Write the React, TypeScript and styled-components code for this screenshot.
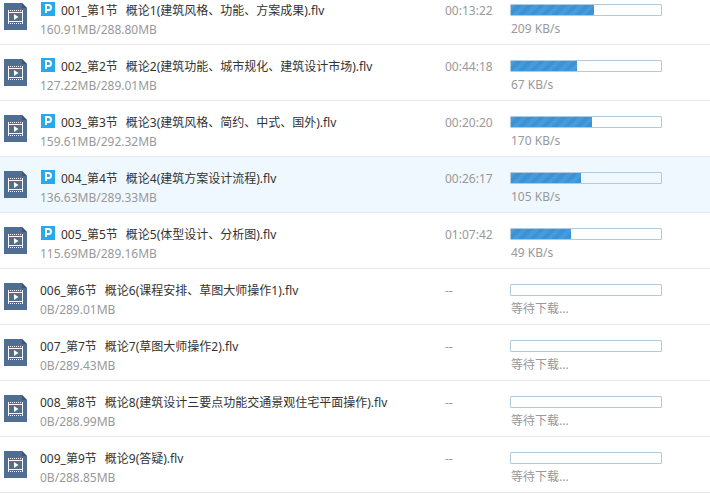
import React from 'react';
import styled, { createGlobalStyle } from 'styled-components';

const GlobalStyle = createGlobalStyle`
  body {
    margin: 0;
    overflow: hidden;
    background: #ffffff;
    font-family: "Noto Sans", "Noto Sans CJK SC", sans-serif;
    font-size: 12px;
    line-height: 19px;
    color: #999999;
  }
`;

interface Download {
  chapter: string;
  name: string;
  size: string;
  time: string;
  speed?: string;
  progress: number;
  selected?: boolean;
}

const downloads: Download[] = [
  { chapter: '001_第1节', name: '概论1(建筑风格、功能、方案成果).flv', size: '160.91MB/288.80MB', time: '00:13:22', speed: '209 KB/s', progress: 55.5 },
  { chapter: '002_第2节', name: '概论2(建筑功能、城市规化、建筑设计市场).flv', size: '127.22MB/289.01MB', time: '00:44:18', speed: '67 KB/s', progress: 44 },
  { chapter: '003_第3节', name: '概论3(建筑风格、简约、中式、国外).flv', size: '159.61MB/292.32MB', time: '00:20:20', speed: '170 KB/s', progress: 54 },
  { chapter: '004_第4节', name: '概论4(建筑方案设计流程).flv', size: '136.63MB/289.33MB', time: '00:26:17', speed: '105 KB/s', progress: 46.8, selected: true },
  { chapter: '005_第5节', name: '概论5(体型设计、分析图).flv', size: '115.69MB/289.16MB', time: '01:07:42', speed: '49 KB/s', progress: 40 },
  { chapter: '006_第6节', name: '概论6(课程安排、草图大师操作1).flv', size: '0B/289.01MB', time: '--', progress: 0 },
  { chapter: '007_第7节', name: '概论7(草图大师操作2).flv', size: '0B/289.43MB', time: '--', progress: 0 },
  { chapter: '008_第8节', name: '概论8(建筑设计三要点功能交通景观住宅平面操作).flv', size: '0B/288.99MB', time: '--', progress: 0 },
  { chapter: '009_第9节', name: '概论9(答疑).flv', size: '0B/288.85MB', time: '--', progress: 0 },
];

/* The list is scrolled slightly, so the first row is cut by the top edge. */
const List = styled.table`
  width: 100%;
  margin-top: -11px;
  border-collapse: separate;
  border-spacing: 0;
  table-layout: fixed;
`;

const IconCol = styled.col`
  width: 40px;
`;
const TimeCol = styled.col`
  width: 65px;
`;
const ProgressCol = styled.col`
  width: 200px;
`;

const Row = styled.tr<{ $selected?: boolean }>`
  background: ${(p) => (p.$selected ? '#f0f8ff' : '#ffffff')};
`;

const Cell = styled.td<{ $top: number }>`
  box-sizing: border-box;
  height: 56px;
  padding: ${(p) => p.$top}px 0 0;
  border-bottom: 1px solid #e8e8e8;
  vertical-align: top;
  white-space: nowrap;
`;

const FileSvg = styled.svg`
  display: block;
  margin-left: 4px;
`;

const Title = styled.div`
  display: flex;
  gap: 8px;
  color: #333333;
`;

const Badge = styled.svg`
  flex: none;
  margin: 1px -2px 0 1px;
`;

const Track = styled.div`
  box-sizing: border-box;
  width: 152px;
  height: 12px;
  border: 1px solid #b2cbdc;
  border-radius: 1px;
`;

const Fill = styled.div`
  height: 100%;
  background: repeating-linear-gradient(135deg, #439cdf 0 4px, #3b92d6 4px 8px);
`;

const Status = styled.div`
  padding: 3px 0 0 1px;
`;

function FileIcon() {
  return (
    <FileSvg width="23" height="27" viewBox="0 0 23 27" aria-hidden="true">
      <path d="M0 0H18L23 5V27H0Z" fill="#506e91" />
      <path d="M18 0V5H23Z" fill="#3a5779" />
      <path d="M4 7.5H19M4 20.5H19" stroke="#fff" strokeDasharray="1 1" />
      <path d="M4.5 7V21M18.5 7V21M4 9.5H19M4 18.5H19" stroke="#fff" fill="none" />
      <path d="M10 11L14.5 14L10 17Z" fill="#fff" />
    </FileSvg>
  );
}

function PlayBadge() {
  return (
    <Badge width="14" height="14" viewBox="0 0 14 14" aria-hidden="true">
      <rect width="14" height="14" fill="#27a9ee" />
      <path d="M5 11V3H7.5A2.5 2.5 0 0 1 7.5 8H5" fill="none" stroke="#fff" strokeWidth="2" />
    </Badge>
  );
}

export default function App() {
  return (
    <>
      <GlobalStyle />
      <List aria-label="下载列表">
        <colgroup>
          <IconCol />
          <col />
          <TimeCol />
          <ProgressCol />
        </colgroup>
        <tbody>
          {downloads.map((d) => (
            <Row key={d.chapter} $selected={d.selected}>
              <Cell $top={14}>
                <FileIcon />
              </Cell>
              <Cell $top={12}>
                <Title>
                  {d.speed && <PlayBadge />}
                  <span>{d.chapter}</span>
                  <span>{d.name}</span>
                </Title>
                <div>{d.size}</div>
              </Cell>
              <Cell $top={12}>{d.time}</Cell>
              <Cell $top={15}>
                <Track role="progressbar" aria-label={d.name} aria-valuenow={d.progress} aria-valuemin={0} aria-valuemax={100}>
                  <Fill style={{ width: `${d.progress}%` }} />
                </Track>
                <Status>{d.speed ?? '等待下载...'}</Status>
              </Cell>
            </Row>
          ))}
        </tbody>
      </List>
    </>
  );
}
